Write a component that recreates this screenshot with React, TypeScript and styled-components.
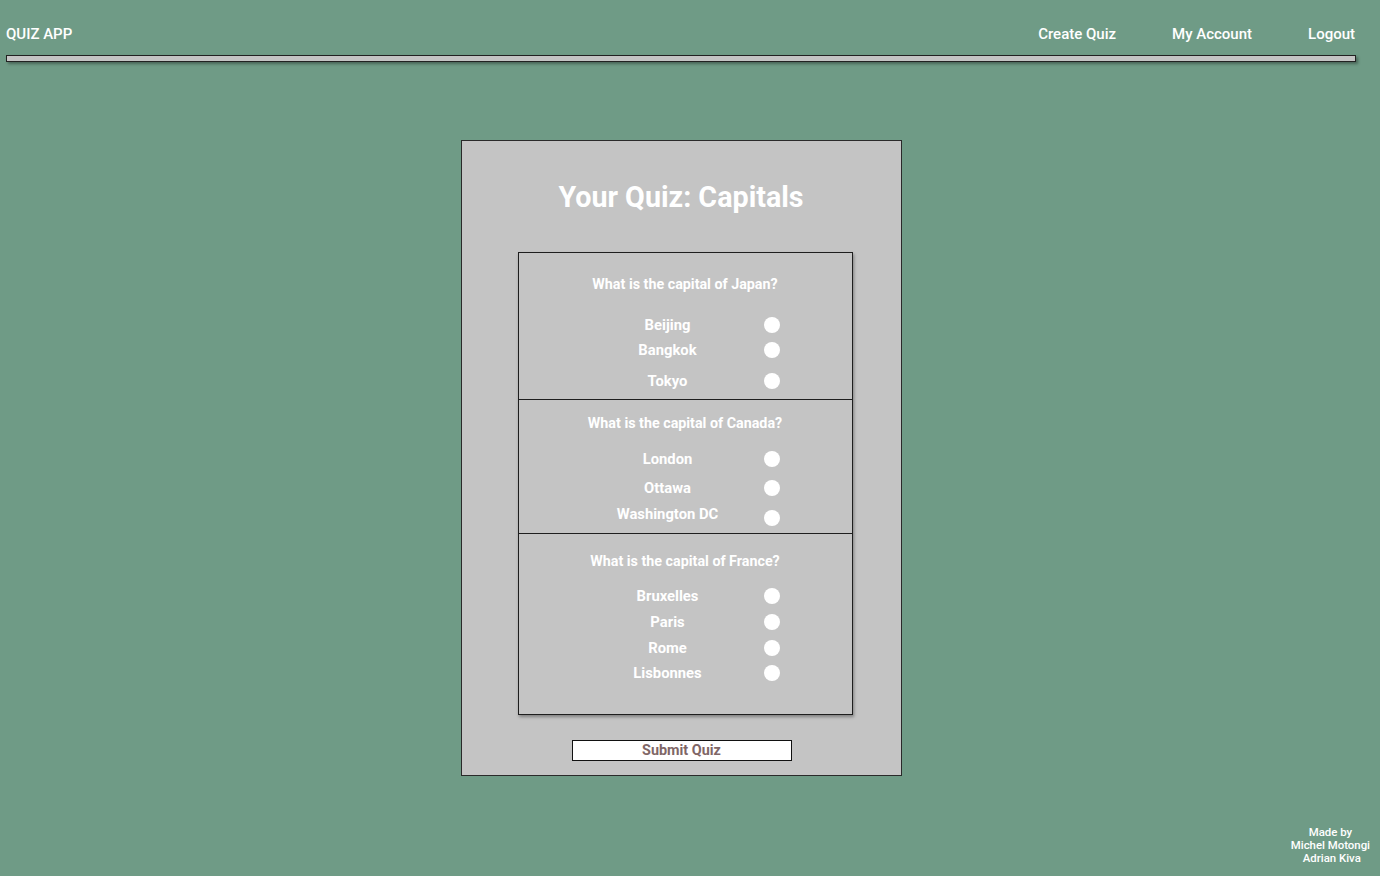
import React from "react";
import styled, { createGlobalStyle } from "styled-components";

const Global = createGlobalStyle`
  html, body { margin: 0; padding: 0; }
  body {
    background: #6f9b86;
    font-family: Roboto, "Liberation Sans", sans-serif;
    color: #fff;
  }
`;

const Page = styled.div`
  min-height: 100vh;
  display: flex;
  flex-direction: column;
`;

const Header = styled.header`
  display: flex;
  align-items: center;
  justify-content: space-between;
  padding: 25px 25px 0 6px;
  height: 18px;
`;

const Brand = styled.div`
  font-size: 15px;
  font-weight: 500;
  line-height: 18px;
`;

const Nav = styled.nav`
  display: flex;
  gap: 56px;
`;

const NavLink = styled.a`
  font-size: 15px;
  font-weight: 500;
  line-height: 18px;
  color: #fff;
  text-decoration: none;
`;

const Bar = styled.div`
  margin: 12px 24px 0 6px;
  height: 5px;
  background: #c4c4c4;
  border: 1px solid #222;
  box-shadow: 2px 2px 3px rgba(0, 0, 0, 0.35);
`;

const Main = styled.main`
  flex: 1;
  display: flex;
  justify-content: center;
  padding: 78px 18px 0 0;
`;

const Card = styled.section`
  box-sizing: border-box;
  width: 441px;
  height: 636px;
  background: #c4c4c4;
  border: 1px solid #2a2a2a;
  padding: 39px 0 0;
  display: flex;
  flex-direction: column;
`;

const Title = styled.h1`
  margin: 0;
  font-size: 28.7px;
  font-weight: 700;
  line-height: 35px;
  text-align: center;
`;

const QuestionBox = styled.div`
  box-sizing: border-box;
  width: 335px;
  margin: 37px 0 0 56px;
  border: 1px solid #1e1e1e;
  box-shadow: 1px 2px 3px rgba(0, 0, 0, 0.35);
`;

const Section = styled.div<{ $pt: number; $pb: number }>`
  padding: ${(p) => p.$pt}px 0 ${(p) => p.$pb}px;
  & + & {
    border-top: 1px solid #1e1e1e;
  }
`;

const Question = styled.div`
  font-size: 14.3px;
  font-weight: 700;
  line-height: 20px;
  text-align: center;
`;

const OptionRow = styled.label<{ $mt: number }>`
  display: grid;
  grid-template-columns: 160px 16px;
  column-gap: 16px;
  align-items: center;
  margin: ${(p) => p.$mt}px 0 0 69px;
  height: 20px;
`;

const OptionLabel = styled.span`
  font-size: 14.8px;
  font-weight: 700;
  line-height: 20px;
  text-align: center;
`;

const Radio = styled.input<{ $dy?: number }>`
  appearance: none;
  margin: 0;
  width: 16px;
  height: 16px;
  border-radius: 50%;
  background: #fff;
  border: none;
  position: relative;
  top: ${(p) => p.$dy ?? 0}px;
`;

const SubmitButton = styled.button`
  box-sizing: border-box;
  align-self: center;
  width: 220px;
  height: 21px;
  margin: 25px 0 0 1px;
  background: #fff;
  border: 1px solid #111;
  color: #806666;
  font-family: Roboto, "Liberation Sans", sans-serif;
  font-size: 14.4px;
  font-weight: 700;
  line-height: 19px;
  padding: 0;
`;

const Footer = styled.footer`
  align-self: flex-end;
  padding: 0 10px 11px 0;
  text-align: center;
  font-size: 11.4px;
  font-weight: 500;
  line-height: 13px;
`;

type Opt = { label: string; mt: number; dy?: number };
type Q = { q: string; pt: number; pb: number; opts: Opt[] };

const questions: Q[] = [
  {
    q: "What is the capital of Japan?",
    pt: 21,
    pb: 8,
    opts: [
      { label: "Beijing", mt: 21 },
      { label: "Bangkok", mt: 5 },
      { label: "Tokyo", mt: 11 },
    ],
  },
  {
    q: "What is the capital of Canada?",
    pt: 13,
    pb: 9,
    opts: [
      { label: "London", mt: 16 },
      { label: "Ottawa", mt: 9 },
      { label: "Washington DC", mt: 6, dy: 4 },
    ],
  },
  {
    q: "What is the capital of France?",
    pt: 17,
    pb: 31,
    opts: [
      { label: "Bruxelles", mt: 15 },
      { label: "Paris", mt: 6 },
      { label: "Rome", mt: 6 },
      { label: "Lisbonnes", mt: 5 },
    ],
  },
];

export default function App() {
  return (
    <Page>
      <Global />
      <Header>
        <Brand>QUIZ APP</Brand>
        <Nav>
          <NavLink>Create Quiz</NavLink>
          <NavLink>My Account</NavLink>
          <NavLink>Logout</NavLink>
        </Nav>
      </Header>
      <Bar />
      <Main>
        <Card>
          <Title>Your Quiz: Capitals</Title>
          <QuestionBox>
            {questions.map((q, qi) => (
              <Section key={qi} $pt={q.pt} $pb={q.pb}>
                <Question>{q.q}</Question>
                {q.opts.map((o) => (
                  <OptionRow key={o.label} $mt={o.mt}>
                    <OptionLabel>{o.label}</OptionLabel>
                    <Radio type="radio" name={`q${qi}`} $dy={o.dy} />
                  </OptionRow>
                ))}
              </Section>
            ))}
          </QuestionBox>
          <SubmitButton>Submit Quiz</SubmitButton>
        </Card>
      </Main>
      <Footer>
        Made by
        <br />
        Michel Motongi
        <br />
        &nbsp;Adrian Kiva
      </Footer>
    </Page>
  );
}
